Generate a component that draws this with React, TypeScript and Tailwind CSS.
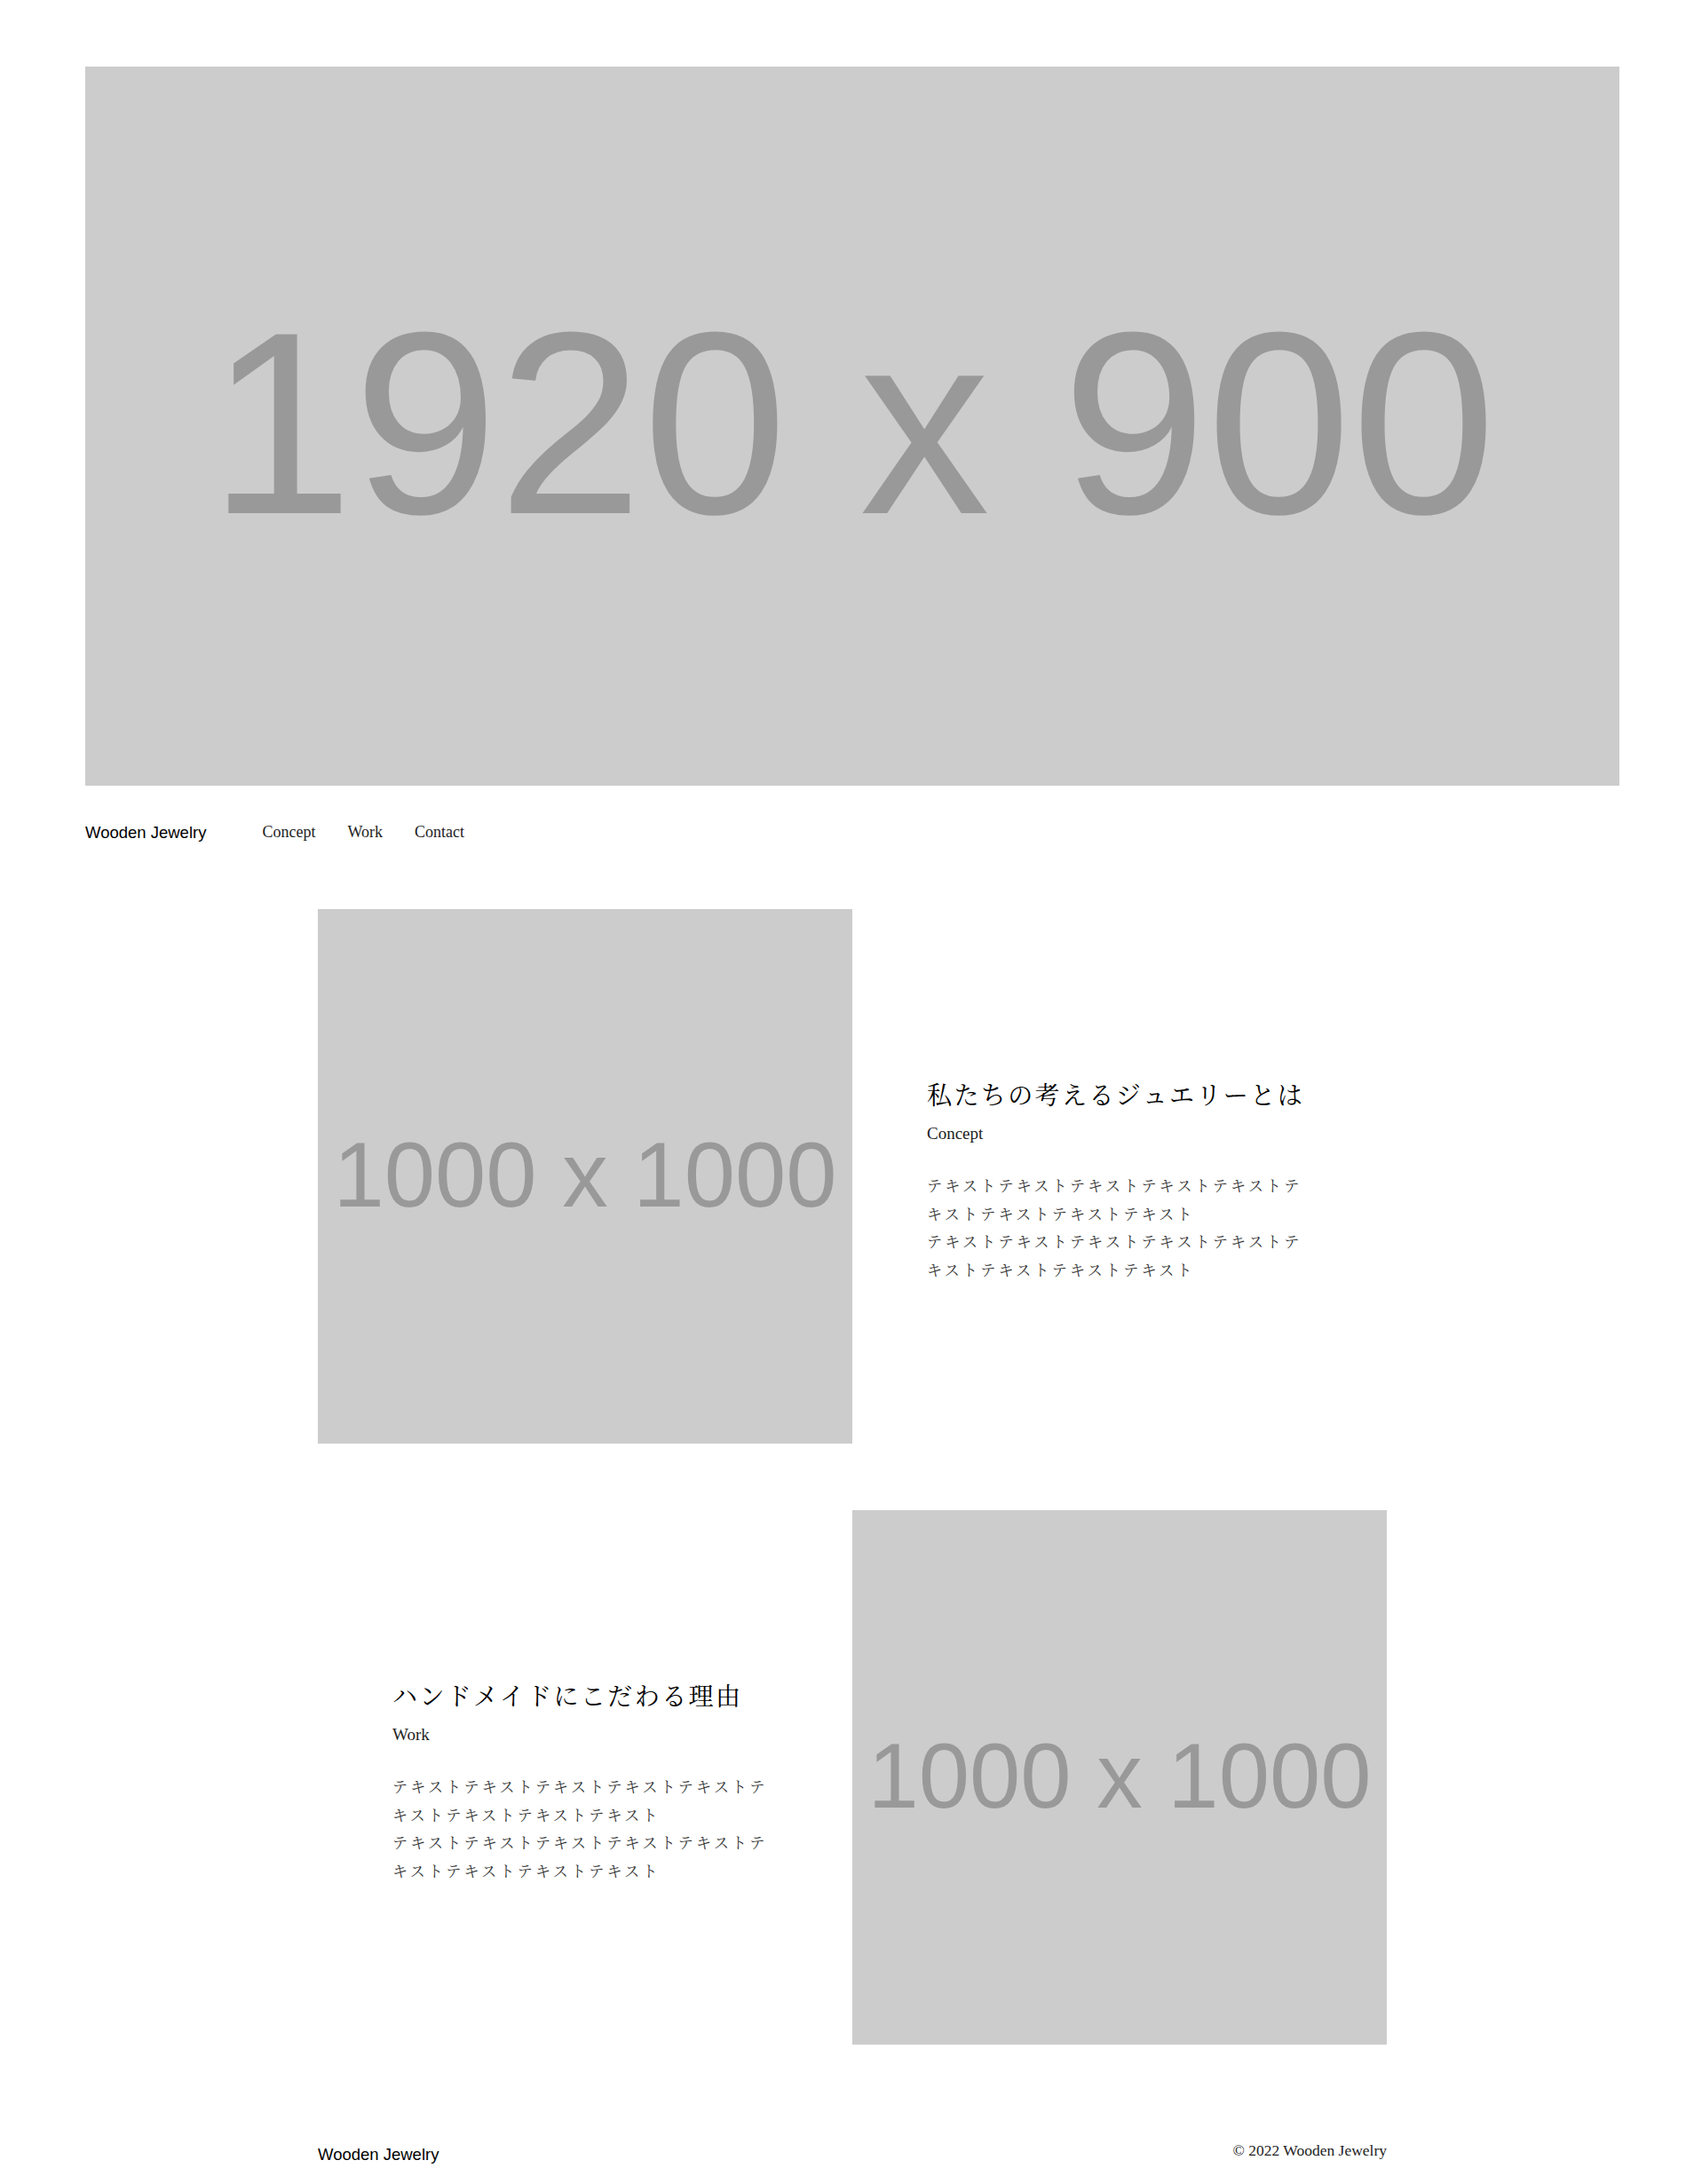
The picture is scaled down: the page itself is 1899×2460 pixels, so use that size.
const serif = "font-['Liberation_Serif','Noto_Serif_CJK_JP','Noto_Sans_CJK_JP',serif]";
const sans = "font-['Liberation_Sans',Arial,sans-serif]";

function Placeholder({ label, className, textClass }: { label: string; className: string; textClass: string }) {
  return (
    <div className={`flex shrink-0 items-center justify-center bg-[#cccccc] ${className}`}>
      <span className={`${sans} leading-none text-[#999999] ${textClass}`}>{label}</span>
    </div>
  );
}

function TextBlock({ title, sub }: { title: string; sub: string }) {
  const line = "テキスト".repeat(9);
  return (
    <div className="w-[438px]">
      <h2 className={`${serif} text-[28px] leading-[42px] tracking-[2.4px] text-black`}>{title}</h2>
      <p className={`${serif} mt-[10px] text-[19px] leading-[22px] text-[#222]`}>{sub}</p>
      <p className={`${serif} mt-[33px] text-[17px] leading-[31.7px] tracking-[3.2px] text-[#333]`}>
        {line}
        <br />
        {line}
      </p>
    </div>
  );
}

export default function App() {
  return (
    <div className="w-[1920px] bg-white">
      <div className="px-[96px] pt-[75px]">
        <Placeholder label="1920 x 900" className="h-[810px] w-[1728px] pb-[8px]" textClass="text-[293px]" />
      </div>

      <header className="flex items-center px-[96px] pt-[39px]">
        <span className={`${sans} text-[18.5px] text-black`}>Wooden Jewelry</span>
        <nav className={`${serif} ml-[63px] flex gap-[36px] text-[18px] text-[#222]`}>
          <a>Concept</a>
          <a>Work</a>
          <a>Contact</a>
        </nav>
      </header>

      <main className="mx-auto mt-[72px] flex w-[1204px] flex-col gap-[75px]">
        <section className="flex">
          <Placeholder label="1000 x 1000" className="h-[602px] w-[602px] pb-[2px]" textClass="text-[103px]" />
          <div className="flex w-[602px] items-center pl-[84px] pt-[12px]">
            <TextBlock title="私たちの考えるジュエリーとは" sub="Concept" />
          </div>
        </section>
        <section className="flex">
          <div className="flex w-[602px] items-center pl-[84px] pt-[12px]">
            <TextBlock title="ハンドメイドにこだわる理由" sub="Work" />
          </div>
          <Placeholder label="1000 x 1000" className="h-[602px] w-[602px] pb-[2px]" textClass="text-[103px]" />
        </section>
      </main>

      <footer className="mx-auto mt-[106px] flex w-[1204px] items-start justify-between pb-[24px]">
        <span className={`${sans} pt-[4px] text-[18.5px] text-black`}>Wooden Jewelry</span>
        <span className={`${serif} text-[17.5px] text-[#222]`}>© 2022 Wooden Jewelry</span>
      </footer>
    </div>
  );
}
